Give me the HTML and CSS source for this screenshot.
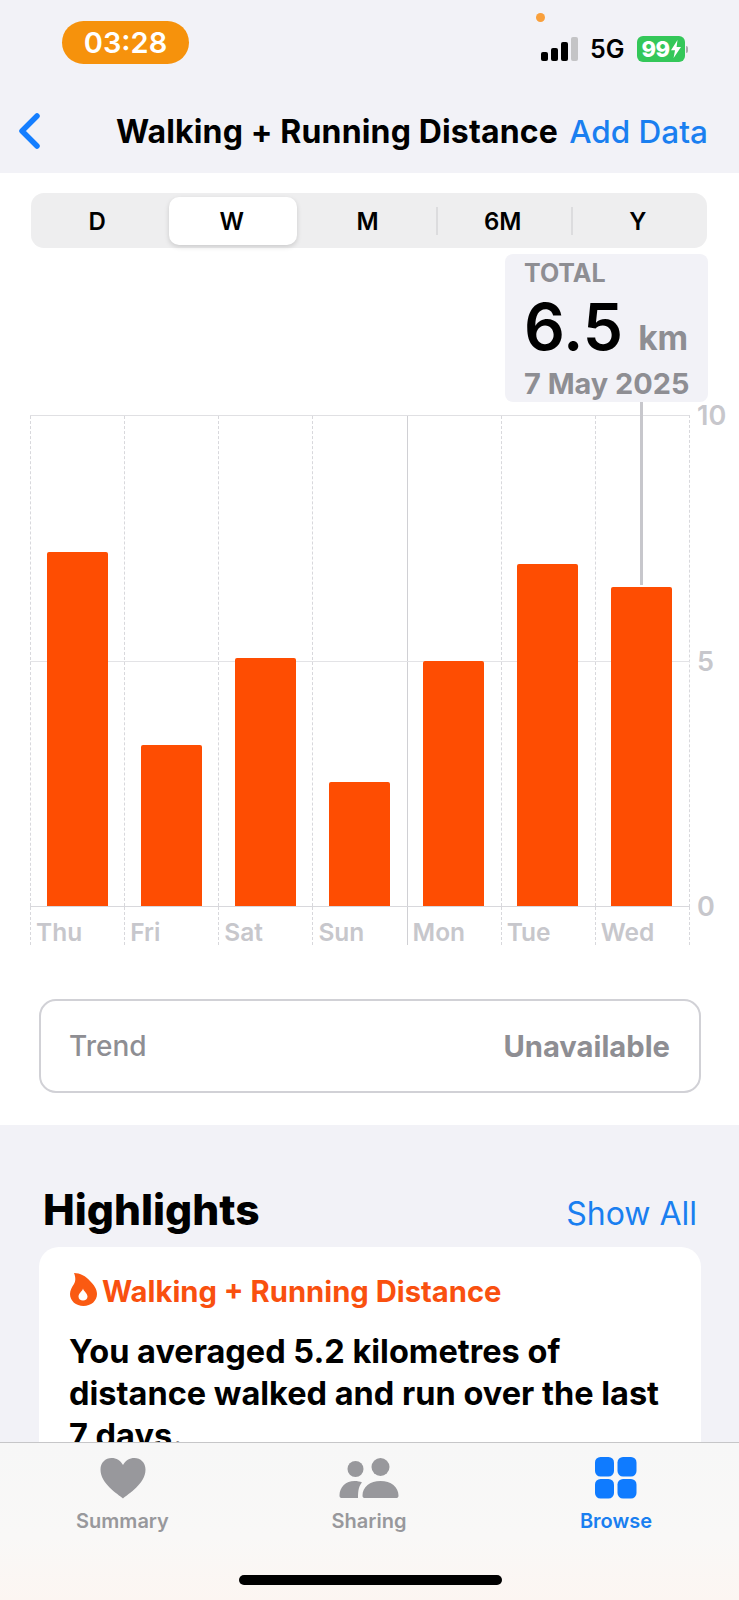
FILE: index.html
```html
<!DOCTYPE html>
<html lang="en">
<head>
    <meta charset="UTF-8">
    <meta name="viewport" content="width=device-width, initial-scale=1.0">
    <title>Walking + Running Distance</title>
    <link rel="stylesheet" href="styles.css">
</head>
<body>
    <div class="phone">
        <header class="top">
            <div class="status">
                <span class="time">03:28</span>
                <span class="mic-dot"></span>
                <div class="status-right">
                    <span class="signal"><i class="b1"></i><i class="b2"></i><i class="b3"></i><i class="b4"></i></span>
                    <span class="net">5G</span>
                    <span class="battery">99<svg class="bolt" viewBox="0 0 10 18"><path d="M6.5 0 0 10.2h4L2.6 18 10 7H5.6z"/></svg></span>
                    <span class="nub"></span>
                </div>
            </div>
            <nav class="nav">
                <svg class="back" viewBox="0 0 24 38"><path d="M20 4 5 19l15 15"/></svg>
                <h1>Walking + Running Distance</h1>
                <a class="add">Add Data</a>
            </nav>
        </header>

        <section class="detail">
            <div class="segments">
                <span class="seg">D</span>
                <span class="seg active">W</span>
                <span class="seg">M</span>
                <span class="seg sep">6M</span>
                <span class="seg sep">Y</span>
            </div>

            <div class="chart">
                <div class="callout">
                    <div class="callout-title">TOTAL</div>
                    <div class="callout-value">6.5 <span>km</span></div>
                    <div class="callout-date">7 May 2025</div>
                </div>
                <div class="callout-line"></div>

                <div class="midline"></div>
                <div class="plot">
                    <div class="col"><div class="bar" style="height:354px"></div></div>
                    <div class="col"><div class="bar" style="height:161px"></div></div>
                    <div class="col"><div class="bar" style="height:248px"></div></div>
                    <div class="col"><div class="bar" style="height:124px"></div></div>
                    <div class="col week"><div class="bar" style="height:245px"></div></div>
                    <div class="col"><div class="bar" style="height:342px"></div></div>
                    <div class="col"><div class="bar" style="height:319px"></div></div>
                </div>
                <div class="days">
                    <span>Thu</span>
                    <span>Fri</span>
                    <span>Sat</span>
                    <span>Sun</span>
                    <span class="week">Mon</span>
                    <span>Tue</span>
                    <span>Wed</span>
                </div>
                <span class="y-label y10">10</span>
                <span class="y-label y5">5</span>
                <span class="y-label y0">0</span>
            </div>

            <div class="trend">
                <span>Trend</span>
                <strong>Unavailable</strong>
            </div>
        </section>

        <section class="highlights">
            <div class="highlights-head">
                <h2>Highlights</h2>
                <a class="show-all">Show All</a>
            </div>
            <div class="card">
                <div class="card-title">
                    <svg class="flame" viewBox="0 0 27 33"><path fill-rule="evenodd" d="M4 0c6 0 12 3 16 8 4 4 7 8 7 13 0 7-6 12-13.500 12S0 28 0 21c0-4 2-7 4-10 1.500-2.500 2-6 0-11zm9 15.500c-.5 2.500-4.500 5-4.500 8 0 2.500 2 4 4.500 4s4.500-1.500 4.500-4c0-3-4-5.500-4.500-8z"/></svg>
                    Walking + Running Distance
                </div>
                <p>You averaged 5.2 kilometres of distance walked and run over the last 7 days.</p>
            </div>
        </section>

        <footer class="tabbar">
            <div class="tabs">
                <div class="tab">
                    <svg class="tab-icon" viewBox="0 0 60 42"><path d="M30 41.500C25 37 7.500 27 7.500 12.500 7.500 5.500 12.500 1 18.500 1 23.500 1 27.500 3.500 30 8c2.500-4.500 6.500-7 11.500-7 6 0 11 4.500 11 11.500C52.500 27 35 37 30 41.500z"/></svg>
                    <span>Summary</span>
                </div>
                <div class="tab">
                    <svg class="tab-icon" viewBox="0 0 60 42"><circle cx="16.500" cy="12" r="8"/><circle cx="41.500" cy="10" r="9"/><path d="M2.500 41c-1.500 0-2-1-2-2.500C.5 30 7 24 15.500 24c3 0 5.500.5 7.500 1.500-3 3-4 8-4 15.500zM25.500 41c-1.500 0-2-1-2-2.500C23.500 30 31 24 41.500 24s18 6 18 14.500c0 1.500-.5 2.500-2 2.500z"/></svg>
                    <span>Sharing</span>
                </div>
                <div class="tab current">
                    <svg class="tab-icon" viewBox="0 0 60 42"><rect x="9" y="0" width="19" height="19.500" rx="5.500"/><rect x="31.500" y="0" width="19" height="19.500" rx="5.500"/><rect x="9" y="22" width="19" height="19.500" rx="5.500"/><rect x="31.500" y="22" width="19" height="19.500" rx="5.500"/></svg>
                    <span>Browse</span>
                </div>
            </div>
            <div class="home-bar"></div>
        </footer>
    </div>
</body>
</html>
```

FILE: styles.css
```css
* {
    box-sizing: border-box;
}
html, body {
    margin: 0;
    padding: 0;
}
body {
    font-family: Inter, "Liberation Sans", sans-serif;
    background-color: #f2f2f7;
    color: #000;
}
.phone {
    position: relative;
    width: 739px;
    height: 1600px;
    overflow: hidden;
}

/* status bar + nav */
.top {
    height: 173px;
    background-color: #f2f2f7;
}
.status {
    position: relative;
    height: 105px;
    padding: 21px 0 0 62px;
}
.time {
    display: flex;
    align-items: center;
    justify-content: center;
    width: 127px;
    height: 43px;
    border-radius: 22px;
    background-color: #f6920c;
    color: #fff;
    font-size: 29px;
    font-weight: 600;
}
.mic-dot {
    position: absolute;
    left: 536px;
    top: 13px;
    width: 9px;
    height: 9px;
    border-radius: 50%;
    background-color: #f9a03c;
}
.status-right {
    position: absolute;
    left: 541px;
    top: 36px;
    display: flex;
    align-items: center;
    height: 26px;
}
.signal {
    display: flex;
    align-items: flex-end;
    gap: 3px;
    height: 24px;
}
.signal i {
    display: block;
    width: 7px;
    border-radius: 2px;
    background-color: #000;
}
.signal .b1 { height: 9px; }
.signal .b2 { height: 13px; }
.signal .b3 { height: 19px; }
.signal .b4 { height: 24px; background-color: #c4c4c6; }
.net {
    margin-left: 12px;
    font-size: 25px;
    font-weight: 600;
    width: 36px;
    white-space: nowrap;
}
.battery {
    display: flex;
    align-items: center;
    justify-content: center;
    gap: 1px;
    margin-left: 11px;
    width: 48px;
    height: 26px;
    border-radius: 6px;
    background-color: #34c759;
    color: #fff;
    font-size: 22px;
    font-weight: 800;
    letter-spacing: -0.5px;
}
.bolt {
    width: 10px;
    height: 20px;
    fill: #fff;
}
.nub {
    width: 2px;
    height: 7px;
    margin-left: 1px;
    border-radius: 0 2px 2px 0;
    background-color: #a9a9ad;
}
.nav {
    position: relative;
    height: 68px;
}
.back {
    position: absolute;
    left: 17px;
    top: 7px;
    width: 24px;
    height: 38px;
    fill: none;
    stroke: #147eff;
    stroke-width: 5.5;
    stroke-linecap: round;
    stroke-linejoin: round;
}
h1 {
    position: absolute;
    left: 116px;
    top: 7px;
    margin: 0;
    font-size: 32px;
    line-height: 40px;
    font-weight: 700;
    letter-spacing: 0.15px;
    white-space: nowrap;
}
.add {
    position: absolute;
    right: 31px;
    top: 7px;
    font-size: 31.5px;
    line-height: 40px;
    font-weight: 500;
    color: #1a7ff0;
}

/* white detail block */
.detail {
    height: 952px;
    padding: 20px 31px 0 31px;
    background-color: #fff;
}
.segments {
    display: grid;
    grid-template-columns: repeat(5, 1fr);
    align-items: center;
    height: 55px;
    width: 676px;
    padding: 4px 0;
    border-radius: 13px;
    background-color: #eeeeef;
}
.seg {
    position: relative;
    display: flex;
    align-items: center;
    justify-content: center;
    height: 48px;
    font-size: 24px;
    font-weight: 600;
    padding-right: 3px;
}
.seg.active {
    margin: 0 4px 0 3px;
    border-radius: 10px;
    background-color: #fff;
    box-shadow: 0 2px 5px rgba(0, 0, 0, 0.15);
}
.seg.sep::before {
    content: "";
    position: absolute;
    left: -1px;
    top: 10px;
    bottom: 10px;
    width: 2px;
    background-color: #dcdcde;
}

/* chart */
.chart {
    position: relative;
    width: 660px;
    margin-left: -1px;
    padding-top: 167px;
}
.callout {
    position: absolute;
    left: 475px;
    top: 6px;
    width: 203px;
    height: 148px;
    padding: 9px 0 0 19px;
    border-radius: 8px;
    background-color: #f2f2f7;
}
.callout-title {
    font-size: 25px;
    line-height: 20px;
    font-weight: 700;
    color: #8e8e93;
}
.callout-value {
    margin-top: 9px;
    font-size: 64px;
    line-height: 70px;
    font-weight: 600;
    white-space: nowrap;
}
.callout-value span {
    margin-left: -1px;
    font-size: 33.5px;
    font-weight: 700;
    color: #8e8e93;
}
.callout-date {
    margin-top: -5px;
    font-size: 28.9px;
    line-height: 32px;
    font-weight: 700;
    color: #8e8e93;
    white-space: nowrap;
}
.callout-line {
    position: absolute;
    left: 610px;
    top: 154px;
    width: 3px;
    height: 183px;
    background-color: #c7c7cc;
}
.midline {
    position: absolute;
    left: 0;
    top: 413px;
    width: 660px;
    height: 1px;
    background-color: #e3e3e6;
}
.plot {
    display: grid;
    grid-template-columns: repeat(7, 1fr);
    height: 492px;
    border-top: 1px solid #e0e0e3;
    border-bottom: 1px solid #d8d8dc;
    border-right: 1px dashed #d8d8dc;
}
.col {
    display: flex;
    align-items: flex-end;
    padding-left: 15.5px;
    border-left: 1px dashed #d8d8dc;
}
.col.week, .days .week {
    border-left: 1px solid #d0d0d4;
}
.bar {
    position: relative;
    width: 61px;
    background-color: #fe4d02;
    border-radius: 2px 2px 0 0;
}
.days {
    display: grid;
    grid-template-columns: repeat(7, 1fr);
    height: 38px;
    border-right: 1px dashed #d8d8dc;
}
.days span {
    height: 38px;
    padding: 12px 0 0 5px;
    border-left: 1px dashed #d8d8dc;
    font-size: 24.5px;
    line-height: 26px;
    font-weight: 600;
    color: #c7c7cc;
    white-space: nowrap;
}
.y-label {
    position: absolute;
    left: 667px;
    font-size: 27px;
    line-height: 24px;
    font-weight: 600;
    color: #c7c7cc;
}
.y10 { top: 156px; }
.y5 { top: 402px; }
.y0 { top: 647px; }

.trend {
    display: flex;
    align-items: center;
    justify-content: space-between;
    width: 662px;
    height: 94px;
    margin: 54px 0 0 8px;
    padding: 0 29px 0 28px;
    border: 2px solid #d1d1d6;
    border-radius: 17px;
    font-size: 28px;
    font-weight: 500;
    color: #8e8e93;
}
.trend strong {
    font-size: 29.2px;
    font-weight: 700;
}

/* highlights */
.highlights {
    padding: 0 38px 0 39px;
}
.highlights-head {
    display: flex;
    align-items: baseline;
    justify-content: space-between;
    height: 122px;
    padding: 61px 4px 0 4px;
}
h2 {
    margin: 0;
    font-size: 42.5px;
    line-height: 48px;
    font-weight: 800;
}
.show-all {
    font-size: 32px;
    color: #1a7ff0;
}
.card {
    height: 300px;
    padding: 27px 30px;
    border-radius: 20px;
    background-color: #fff;
}
.card-title {
    display: flex;
    align-items: center;
    gap: 5px;
    font-size: 29.2px;
    line-height: 36px;
    font-weight: 700;
    color: #f9500f;
}
.flame {
    width: 27px;
    height: 33px;
    margin: -5px 0 0 1px;
    fill: #fa5a12;
}
.card p {
    margin: 21px 0 0 0;
    font-size: 32.5px;
    line-height: 42px;
    font-weight: 700;
}

/* tab bar */
.tabbar {
    position: absolute;
    left: 0;
    top: 1442px;
    width: 739px;
    height: 158px;
    border-top: 1px solid #c6c6c8;
    background: linear-gradient(#f7f7f7, #f9f8f7 60%, #fcf6f2);
}
.tabs {
    display: grid;
    grid-template-columns: 245px 248px 246px;
    padding-top: 14px;
}
.tab {
    display: flex;
    flex-direction: column;
    align-items: center;
    font-size: 20px;
    line-height: 28px;
    font-weight: 600;
    color: #98989c;
}
.tab-icon {
    width: 60px;
    height: 42px;
    margin-bottom: 8px;
    fill: #98989c;
}
.tab.current {
    color: #1a7ff0;
}
.tab.current .tab-icon {
    fill: #0f7bff;
}
.home-bar {
    position: absolute;
    left: 239px;
    top: 132px;
    width: 263px;
    height: 10px;
    border-radius: 5px;
    background-color: #000;
}
```
